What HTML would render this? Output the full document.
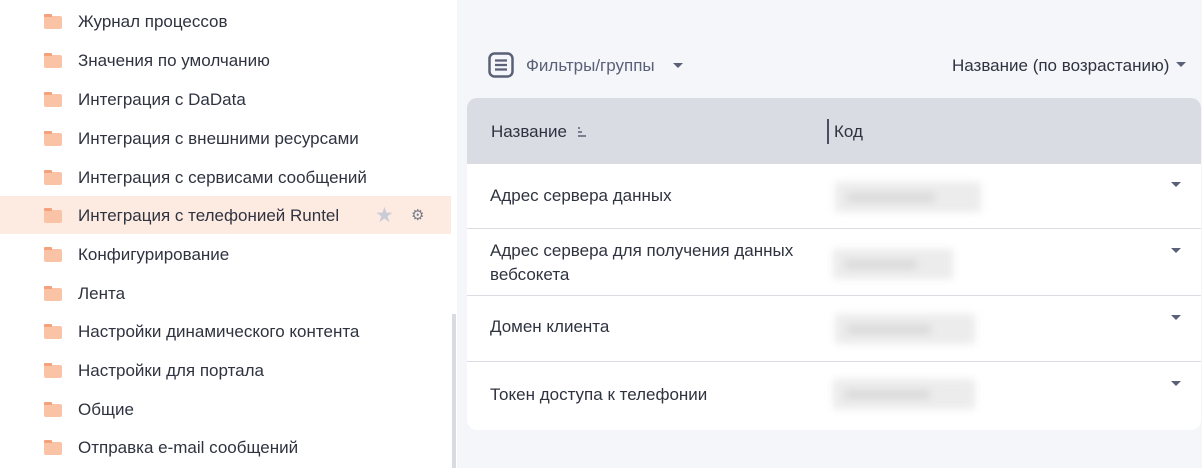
<!DOCTYPE html>
<html><head><meta charset="utf-8"><style>
*{margin:0;padding:0;box-sizing:border-box}
body{width:1202px;height:468px;overflow:hidden;background:#f5f6fa;font-family:"Liberation Sans",sans-serif;color:#2f3340;position:relative}
#left{position:absolute;left:0;top:0;width:457px;height:468px;background:#fff}
.it{position:absolute;left:0;width:451px;height:38px;font-size:17px;line-height:40px;padding-left:78px}
.it.sel{background:#fdebe2}
.fold{position:absolute;left:44px;top:14px;width:18px;height:13px;background:#fbc3a6;border-radius:2px}
.fold:before{content:"";position:absolute;left:0;top:-2px;width:8px;height:3px;background:#f5a27c;border-radius:1px 1px 0 0}
.sb{position:absolute;left:452px;top:314px;width:4px;height:154px;background:#d9dbe3}
.card{position:absolute;left:467px;top:98px;width:734px;height:332px;background:#fff;border-radius:10px;overflow:hidden}
.hdr{height:65px;background:#d9dce3;position:relative;font-size:17px}
.row{position:absolute;left:0;width:734px;border-top:1px solid #dcdde2;font-size:17px}
.blur{position:absolute;height:30px;background:#ececec;filter:blur(4px)}
.blur:after{content:"";position:absolute;left:12px;top:11px;width:60%;height:9px;background:#dadada}
.car{position:absolute;right:20px;width:0;height:0;border-left:5px solid transparent;border-right:5px solid transparent;border-top:5px solid #5a6078}
</style></head><body>
<div id="left">
<div class="it" style="top:2px"><i class="fold"></i>Журнал процессов</div>
<div class="it" style="top:41px"><i class="fold"></i>Значения по умолчанию</div>
<div class="it" style="top:80px"><i class="fold"></i>Интеграция с DaData</div>
<div class="it" style="top:119px"><i class="fold"></i>Интеграция с внешними ресурсами</div>
<div class="it" style="top:158px"><i class="fold"></i>Интеграция с сервисами сообщений</div>
<div class="it sel" style="top:196px"><i class="fold"></i>Интеграция с телефонией Runtel
<span style="position:absolute;left:375px;top:0;color:#c9ccd6;font-size:21px">★</span>
<span style="position:absolute;left:411px;top:0;color:#777c8c;font-size:15px">⚙</span></div>
<div class="it" style="top:235px"><i class="fold"></i>Конфигурирование</div>
<div class="it" style="top:274px"><i class="fold"></i>Лента</div>
<div class="it" style="top:312px"><i class="fold"></i>Настройки динамического контента</div>
<div class="it" style="top:351px"><i class="fold"></i>Настройки для портала</div>
<div class="it" style="top:390px"><i class="fold"></i>Общие</div>
<div class="it" style="top:428px"><i class="fold"></i>Отправка e-mail сообщений</div>
<div class="sb"></div>
</div>
<svg style="position:absolute;left:488px;top:52px" width="26" height="26" viewBox="0 0 26 26"><rect x="1.5" y="1.5" width="23" height="23" rx="5" fill="none" stroke="#5a6078" stroke-width="2.5"/><path d="M7 8.5h12M7 13h12M7 17.5h12" stroke="#5a6078" stroke-width="2.2"/></svg>
<div style="position:absolute;left:526px;top:56px;font-size:17px;color:#5a6078">Фильтры/группы</div>
<div class="car" style="left:673px;top:63px"></div>
<div style="position:absolute;left:952px;top:56px;font-size:17px;color:#2f3340">Название (по возрастанию)</div>
<div class="car" style="left:1176px;top:62px"></div>
<div class="card">
<div class="hdr"><span style="position:absolute;left:24px;top:24px">Название</span>
<svg style="position:absolute;left:110px;top:28px" width="10" height="12"><path d="M1 2h2M1 6h4M1 10h8" stroke="#5a6078" stroke-width="1.6"/></svg>
<div style="position:absolute;left:360px;top:21px;width:2px;height:25px;background:#4a4f63"></div>
<span style="position:absolute;left:367px;top:24px">Код</span></div>
<div class="row" style="top:65px;height:66px"><span style="position:absolute;left:23px;top:22px">Адрес сервера данных</span><div class="blur" style="left:368px;top:18px;width:146px"></div><div class="car" style="top:18px"></div></div>
<div class="row" style="top:130px;height:67px"><span style="position:absolute;left:23px;top:10px;line-height:24px">Адрес сервера для получения данных<br>вебсокета</span><div class="blur" style="left:366px;top:20px;width:120px"></div><div class="car" style="top:19px"></div></div>
<div class="row" style="top:197px;height:66px"><span style="position:absolute;left:23px;top:21px">Домен клиента</span><div class="blur" style="left:368px;top:18px;width:140px"></div><div class="car" style="top:19px"></div></div>
<div class="row" style="top:263px;height:69px"><span style="position:absolute;left:23px;top:23px">Токен доступа к телефонии</span><div class="blur" style="left:366px;top:17px;width:142px"></div><div class="car" style="top:19px"></div></div>
</div>
</body></html>
